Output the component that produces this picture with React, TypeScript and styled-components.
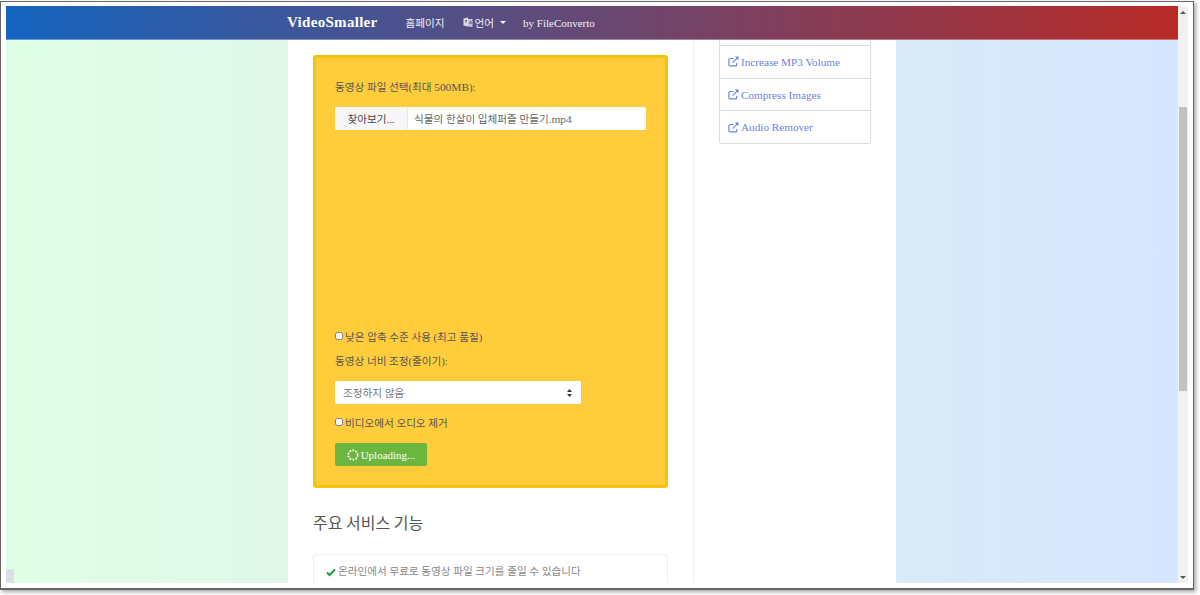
import styled, { createGlobalStyle } from "styled-components";

const GlobalStyle = createGlobalStyle`
  html, body {
    margin: 0;
    height: 595px;
    overflow: hidden;
    background: #fff;
  }
  body {
    font-family: "Liberation Serif", "Noto Sans CJK KR", serif;
    font-size: 10.6px;
    color: #555;
  }
`;

const Frame = styled.div`
  box-sizing: border-box;
  width: 1194px;
  height: 589px;
  margin-top: 1px;
  padding: 4px 4px 5px 5px;
  border: 1px solid #666;
  border-bottom-width: 2px;
  box-shadow: 2px 2px 4px rgba(0, 0, 0, 0.35);
  background: #fff;
  display: flex;
`;

const Viewport = styled.div`
  position: relative;
  width: 1172px;
  display: flex;
  flex-direction: column;
  overflow: hidden;
`;

const Navbar = styled.nav`
  flex: none;
  height: 33px;
  display: flex;
  align-items: center;
  padding-left: 281px;
  color: #fff;
  background: linear-gradient(to right, #1565c0, #b92b27);
  border-bottom: 1px solid rgba(255, 255, 255, 0.35);
`;

const Brand = styled.span`
  font-size: 15px;
  font-weight: 700;
  margin-right: 28px;
  letter-spacing: 0.3px;
`;

const NavLink = styled.span<{ $gap?: number }>`
  font-size: 10.6px;
  margin-right: ${(p) => p.$gap ?? 18}px;
  display: inline-flex;
  align-items: center;
  gap: 2px;
  opacity: 0.92;
`;

const Latin = styled.span<{ $size?: number }>`
  font-size: ${(p) => p.$size ?? 11.4}px;
`;

const Caret = styled.i`
  width: 0;
  height: 0;
  margin-left: 4px;
  border-left: 3px solid transparent;
  border-right: 3px solid transparent;
  border-top: 3px solid #fff;
`;

const Body = styled.div`
  flex: 1;
  min-height: 0;
  display: grid;
  grid-template-columns: 282px 608px 282px;
`;

const LeftSide = styled.div`
  background: linear-gradient(to right, #e0ffe6, #e0f7ea);
`;

const RightSide = styled.div`
  background: linear-gradient(to right, #dbeaf8, #d6e6ff);
`;

const Center = styled.div`
  display: grid;
  grid-template-columns: 406px 202px;
  background: #fff;
  overflow: hidden;
`;

const Main = styled.main`
  padding: 15px 25px 0;
  border-right: 1px solid #eee;
`;

const Card = styled.section`
  box-sizing: border-box;
  height: 433px;
  padding: 21px 19px 0;
  display: flex;
  flex-direction: column;
  align-items: flex-start;
  background: #ffcd3c;
  border: 3px solid #f1c40f;
  border-radius: 3px;
`;

const Label = styled.div<{ $top?: number }>`
  margin-top: ${(p) => p.$top ?? 0}px;
  line-height: 16px;
`;

const FileRow = styled.div`
  margin-top: 11px;
  width: 311px;
  height: 23px;
  display: flex;
  background: #fff;
  border-radius: 2px;
  overflow: hidden;
`;

const Browse = styled.span`
  width: 72px;
  display: flex;
  align-items: center;
  justify-content: center;
  background: #f7f7f9;
  border-right: 1px solid #e8e8e8;
  color: #444;
`;

const FileName = styled.span`
  padding-left: 6px;
  display: flex;
  align-items: center;
  white-space: pre;
  color: #666;
`;

const CheckRow = styled.label<{ $top: number }>`
  margin-top: ${(p) => p.$top}px;
  display: flex;
  align-items: center;
  height: 16px;
  gap: 2px;
`;

const Check = styled.input`
  width: 8px;
  height: 8px;
  margin: 0;
`;

const SelectBox = styled.div`
  margin-top: 11px;
  box-sizing: border-box;
  width: 246px;
  height: 23px;
  padding: 0 9px 0 8px;
  display: flex;
  align-items: center;
  justify-content: space-between;
  background: #fff;
  border-radius: 2px;
  color: #777;
`;

const UploadButton = styled.button`
  margin-top: 13px;
  width: 92px;
  height: 23px;
  padding: 0;
  display: flex;
  align-items: center;
  justify-content: center;
  gap: 2px;
  background: #6cb53f;
  border: none;
  border-radius: 2px;
  color: #fff;
  font: inherit;
  font-size: 11px;
`;

const Heading = styled.h2`
  margin: 23px 0 0;
  font-family: "Noto Sans CJK KR", sans-serif;
  font-weight: 400;
  font-size: 16px;
  line-height: 23px;
  color: #555;
`;

const FeatureBox = styled.div`
  margin-top: 20px;
  height: 60px;
  padding: 10px 12px;
  box-sizing: border-box;
  border: 1px solid #eee;
  border-radius: 3px;
  display: flex;
  align-items: flex-start;
  gap: 2px;
  color: #888;
  line-height: 14px;
`;

const Aside = styled.aside`
  padding: 0 25px;
`;

const LinkList = styled.div`
  border: 1px solid #ddd;
  border-top: none;
  border-radius: 0 0 3px 3px;
`;

const LinkStub = styled.div`
  height: 5px;
`;

const LinkItem = styled.a`
  box-sizing: border-box;
  height: 32.7px;
  padding-left: 8px;
  display: flex;
  align-items: center;
  gap: 2px;
  border-top: 1px solid #ddd;
  color: #6f82dc;
  font-size: 11.2px;
`;

const LeftNub = styled.div`
  position: absolute;
  left: 0;
  bottom: 0;
  width: 8px;
  height: 14px;
  background: #dcdfe6;
  border-radius: 2px 2px 0 0;
`;

const Scrollbar = styled.div`
  position: relative;
  width: 10px;
  background: #f1f1f1;
`;

const ScrollThumb = styled.div`
  position: absolute;
  top: 101px;
  left: 1px;
  width: 8px;
  height: 284px;
  background: #c1c1c1;
`;

const ScrollArrow = styled.i<{ $down?: boolean }>`
  position: absolute;
  left: 2px;
  ${(p) => (p.$down ? "bottom: 4px;" : "top: 5px;")}
  width: 0;
  height: 0;
  border-left: 3px solid transparent;
  border-right: 3px solid transparent;
  ${(p) => (p.$down ? "border-top: 3px solid #555;" : "border-bottom: 3px solid #555;")}
`;

const LinkIcon = () => (
  <svg width="11" height="11" viewBox="0 0 12 12" fill="none" stroke="#6f82dc" strokeWidth="1.3">
    <path d="M9.500 7.500v2a1.300 1.300 0 0 1-1.300 1.300H2.300A1.300 1.300 0 0 1 1 9.500V4a1.300 1.300 0 0 1 1.300-1.300H6" />
    <path d="M5 7.200l5.200-5.200" />
    <path d="M7.500 0.500H11.500V4.500z" fill="#6f82dc" stroke="none" />
  </svg>
);

const Arrows = () => (
  <svg width="5" height="8" viewBox="0 0 5 8" fill="#333">
    <path d="M2.500 0L5 3H0zM2.500 8L0 5h5z" />
  </svg>
);

const Spinner = () => (
  <svg width="12" height="12" viewBox="0 0 12 12" fill="none" stroke="#fff" strokeWidth="1.800" strokeDasharray="1.700 1.300">
    <circle cx="6" cy="6" r="4.700" />
  </svg>
);

const Tick = () => (
  <svg width="10" height="10" viewBox="0 0 10 10" fill="none" stroke="#1e9e3e" strokeWidth="2" style={{ marginTop: 2 }}>
    <path d="M1 5.500l2.500 2.500L9 2.500" />
  </svg>
);

const LangIcon = () => (
  <svg width="10" height="11" viewBox="0 0 10 11">
    <path d="M0.500 1.500L5 0.500V9.500L0.500 8.500z" fill="#e8e8f2" />
    <path d="M5 2H9.500V10L5 9.500z" fill="#cfd0e0" />
    <path d="M2 3.500h2M3 3v3" stroke="#4a4a70" strokeWidth="0.8" fill="none" />
    <path d="M6.500 7l1-3 1 3" stroke="#4a4a70" strokeWidth="0.8" fill="none" />
  </svg>
);

const links = ["Increase MP3 Volume", "Compress Images", "Audio Remover"];

export default function App() {
  return (
    <>
      <GlobalStyle />
      <Frame>
        <Viewport>
          <Navbar>
            <Brand>VideoSmaller</Brand>
            <NavLink>홈페이지</NavLink>
            <NavLink $gap={17}>
              <LangIcon />
              언어
              <Caret />
            </NavLink>
            <NavLink>
              <Latin $size={11}>by FileConverto</Latin>
            </NavLink>
          </Navbar>
          <Body>
            <LeftSide />
            <Center>
              <Main>
                <Card>
                  <Label>
                    동영상 파일 선택(최대 <Latin>500MB</Latin>):
                  </Label>
                  <FileRow>
                    <Browse>찾아보기...</Browse>
                    <FileName>
                      식물의 한살이 입체퍼즐 만들기<Latin>.mp4</Latin>
                    </FileName>
                  </FileRow>
                  <CheckRow $top={198}>
                    <Check type="checkbox" />
                    낮은 압축 수준 사용 (최고 품질)
                  </CheckRow>
                  <Label $top={10}>동영상 너비 조정(줄이기):</Label>
                  <SelectBox>
                    조정하지 않음
                    <Arrows />
                  </SelectBox>
                  <CheckRow $top={10}>
                    <Check type="checkbox" />
                    비디오에서 오디오 제거
                  </CheckRow>
                  <UploadButton>
                    <Spinner />
                    Uploading...
                  </UploadButton>
                </Card>
                <Heading>주요 서비스 기능</Heading>
                <FeatureBox>
                  <Tick />
                  온라인에서 무료로 동영상 파일 크기를 줄일 수 있습니다
                </FeatureBox>
              </Main>
              <Aside>
                <LinkList>
                  <LinkStub />
                  {links.map((l) => (
                    <LinkItem key={l}>
                      <LinkIcon />
                      {l}
                    </LinkItem>
                  ))}
                </LinkList>
              </Aside>
            </Center>
            <RightSide />
          </Body>
          <LeftNub />
        </Viewport>
        <Scrollbar>
          <ScrollArrow />
          <ScrollThumb />
          <ScrollArrow $down />
        </Scrollbar>
      </Frame>
    </>
  );
}
